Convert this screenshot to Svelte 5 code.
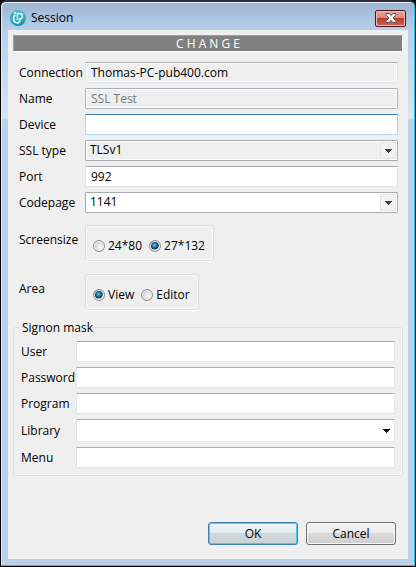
<script>
  let device = $state('');
  let sslType = $state('TLSv1');
  let port = $state('992');
  let codepage = $state('1141');
  let screensize = $state('27*132');
  let area = $state('View');
</script>

{#snippet dropGlyph()}
  <svg width="7" height="4" viewBox="0 0 7 4" aria-hidden="true"><path d="M0 0H7V1H6V2H5V3H4V4H3V3H2V2H1V1H0Z" /></svg>
{/snippet}

<div class="window">
  <header>
    <svg class="logo" width="16" height="16" viewBox="0 0 16 16" aria-hidden="true">
      <defs>
        <linearGradient id="teal" x1="0" y1="0" x2="0" y2="1">
          <stop offset="0" stop-color="#58bccb" />
          <stop offset="1" stop-color="#0799b3" />
        </linearGradient>
      </defs>
      <circle cx="8" cy="8" r="8" fill="url(#teal)" />
      <path d="M4.8 5.4Q3.6 6.6 3.6 8.6Q3.6 12.8 7.2 12.8Q9.8 12.8 9.8 10.2V9.2" fill="none" stroke="#e9fbfc" stroke-width="1.7" stroke-linecap="round" />
      <path d="M7.4 9.6V3.6H9.6Q12.4 3.6 12.4 6.2Q12.4 8.8 9.8 8.8" fill="none" stroke="#e9fbfc" stroke-width="1.5" stroke-linecap="round" stroke-linejoin="round" />
      <circle cx="5.2" cy="3" r="1" fill="#e9fbfc" />
    </svg>
    <h1>Session</h1>
    <button class="close" type="button" aria-label="Close">
      <svg width="12" height="10" viewBox="0 0 12 10" aria-hidden="true">
        <path d="M1 .5H4.2L6 2.6L7.8 .5H11V1.8L8.2 5L11 8.2V9.5H7.8L6 7.4L4.2 9.5H1V8.2L3.8 5L1 1.8Z" fill="#f3f3f5" stroke="#53576a" stroke-width="1" />
      </svg>
    </button>
  </header>

  <form onsubmit={(e) => e.preventDefault()}>
    <h2>C H A N G E</h2>

    <div class="rows">
      <label for="connection">Connection</label>
      <input id="connection" class="plain" readonly value="Thomas-PC-pub400.com" />
      <label for="name">Name</label>
      <input id="name" disabled value="SSL Test" />
      <label for="device">Device</label>
      <input id="device" class="active" bind:value={device} />
      <label for="ssl">SSL type</label>
      <div class="combo boxed gray">
        <select id="ssl" bind:value={sslType}><option>TLSv1</option></select>
        <span class="drop">{@render dropGlyph()}</span>
      </div>
      <label for="port">Port</label>
      <input id="port" bind:value={port} />
      <label for="codepage">Codepage</label>
      <div class="combo boxed">
        <select id="codepage" bind:value={codepage}><option>1141</option></select>
        <span class="drop">{@render dropGlyph()}</span>
      </div>
    </div>

    <div class="choices">
      <span id="screensize">Screensize</span>
      <div class="group" role="radiogroup" aria-labelledby="screensize">
        {#each ['24*80', '27*132'] as size}
          <label><input type="radio" name="screensize" value={size} bind:group={screensize} />{size}</label>
        {/each}
      </div>
      <span id="area">Area</span>
      <div class="group" role="radiogroup" aria-labelledby="area">
        {#each ['View', 'Editor'] as kind}
          <label><input type="radio" name="area" value={kind} bind:group={area} />{kind}</label>
        {/each}
      </div>
    </div>

    <fieldset>
      <legend>Signon mask</legend>
      <div class="rows signon">
        <label for="user">User</label>
        <input id="user" />
        <label for="password">Password</label>
        <input id="password" type="password" />
        <label for="program">Program</label>
        <input id="program" />
        <label for="library">Library</label>
        <div class="combo tall">
          <select id="library"><option></option></select>
          <span class="drop">{@render dropGlyph()}</span>
        </div>
        <label for="menu">Menu</label>
        <input id="menu" />
      </div>
    </fieldset>

    <footer>
      <button class="push ok" type="submit">OK</button>
      <button class="push" type="button">Cancel</button>
    </footer>
  </form>
</div>

<style>
  :global(body) {
    background: #000;
  }
  .window,
  .window * {
    box-sizing: border-box;
  }
  .window {
    display: flex;
    flex-direction: column;
    min-height: 100vh;
    padding: 0 6px 7px;
    border: 1px solid #000;
    border-top: 2px solid #2f2d38;
    border-radius: 6px 6px 0 0;
    background: linear-gradient(#9ab4d3 0, #b7cfe9 28px, #d7e5f4 116px, #b9d0e9 118px);
    box-shadow: inset -1px -1px #2cc5e8, inset 1px 1px #e6f1fb;
    font: 12px/16px "Open Sans", "Noto Sans", sans-serif;
    color: #000;
  }
  header {
    display: flex;
    align-items: center;
    height: 28px;
    padding: 4px 1px 0 3px;
  }
  h1 {
    flex: 1;
    margin: 0 0 0 5px;
    font: inherit;
  }
  .close {
    display: flex;
    align-items: center;
    justify-content: center;
    width: 31px;
    height: 17px;
    margin: 0 2px 0 0;
    padding: 0;
    border: 1px solid #4c1620;
    border-radius: 2px;
    background: linear-gradient(#e8a89e 0, #d98477 48%, #bb3f27 50%, #cf6550 100%);
    box-shadow: inset 0 0 0 1px #ecbbb2;
  }
  form {
    flex: 1;
    display: flex;
    flex-direction: column;
    margin-right: 1px;
    margin-left: 1px;
    padding: 5px;
    background: #efefef;
  }
  h2 {
    height: 17px;
    margin: 0;
    border: 1px solid;
    border-color: #a0a0a0 #fff #fff #a0a0a0;
    background: #808080;
    color: #fff;
    font: inherit;
    line-height: 15px;
    text-align: center;
  }
  .rows {
    display: grid;
    grid-template-columns: 66px 1fr;
    gap: 5px 0;
    align-items: center;
    padding: 10px 5px 0 6px;
  }
  .rows input,
  .combo {
    width: 100%;
    height: 21px;
    border: 1px solid #e0e5ed;
    border-top-color: #abadb3;
    border-radius: 1px;
    background: #fff;
  }
  .rows input {
    padding: 0 5px;
    outline: none;
    font: inherit;
    color: inherit;
  }
  .rows input.plain {
    background: #efefef;
    box-shadow: inset 0 0 0 1px #f8f8f8;
  }
  .rows input:disabled {
    border-color: #b0b1b4;
    background: #efefef;
    box-shadow: inset 0 0 0 1px #fff;
    color: #777;
  }
  .rows input.active {
    border-color: #3d7bad #a9cfe8 #b7d9ed #b5cfe7;
  }
  .combo {
    display: grid;
  }
  .combo > * {
    grid-area: 1 / 1;
  }
  .boxed {
    padding: 1px;
    border-color: #a9abb0;
  }
  .gray select {
    background: #efefef;
  }
  .tall {
    height: 23px;
  }
  select {
    appearance: none;
    width: 100%;
    height: 100%;
    padding: 0 20px 2px 3px;
    border: 0;
    outline: none;
    background: #fff;
    color: #000;
    font: inherit;
    line-height: 15px;
  }
  .drop {
    justify-self: end;
    display: flex;
    align-items: center;
    justify-content: center;
    width: 16px;
    pointer-events: none;
  }
  .boxed .drop {
    border: 1px solid #e4e4e4;
    background: #f2f2f2;
    fill: #3c3c3c;
  }
  .choices {
    display: grid;
    grid-template-columns: 66px max-content;
    gap: 13px 0;
    padding: 12px 5px 0 6px;
  }
  .choices > span {
    padding-top: 7px;
  }
  .group {
    display: flex;
    gap: 7px;
    justify-self: start;
    height: 36px;
    padding: 6px 8px 0 7px;
    border: 1px solid #d5dfe5;
    border-radius: 3px;
    box-shadow: inset 0 0 0 1px #fafafa, 0 1px #fff;
  }
  .group label {
    display: flex;
    align-items: center;
    gap: 3px;
    height: 27px;
  }
  .group input {
    appearance: none;
    width: 12px;
    height: 12px;
    margin: 0;
    border: 1px solid #8e8f8f;
    border-radius: 50%;
    background: radial-gradient(circle at 60% 60%, #f4f4f4 10%, #c8ccd0 75%);
    box-shadow: inset 0 0 0 1px #f6f6f6;
  }
  .group input:checked {
    background: radial-gradient(circle at 45% 42%, #7fd0ef 0, #2782ac 22%, #0b3556 48%, #c6d3da 58%);
  }
  fieldset {
    min-width: 0;
    margin: 9px 0 0;
    padding: 0 2px 7px;
    border: 1px solid #d5dfe8;
    border-radius: 3px;
    box-shadow: inset 0 -1px #fff, inset -1px 0 #fff;
  }
  legend {
    margin-left: 4px;
    padding: 0 2px;
    line-height: 17px;
  }
  .signon {
    grid-template-columns: 55px 1fr;
    padding: 5px 5px 0;
  }
  footer {
    display: flex;
    justify-content: flex-end;
    gap: 8px;
    margin-top: auto;
    padding: 24px 7px 9px 0;
  }
  .push {
    width: 90px;
    height: 23px;
    padding: 0;
    border: 1px solid #707070;
    border-radius: 3px;
    background: linear-gradient(#f2f2f2 0, #ebebeb 48%, #dadada 50%, #cfcfcf 100%);
    box-shadow: inset 0 0 0 1px #f8f8f8;
    color: #000;
    font: inherit;
  }
  .ok {
    border-color: #3c7fb1;
    background: linear-gradient(#eef3f5 0, #e4ebed 48%, #cfd9dd 50%, #cbd2d5 100%);
    box-shadow: inset 0 0 0 1px #45cdf0;
  }
</style>
